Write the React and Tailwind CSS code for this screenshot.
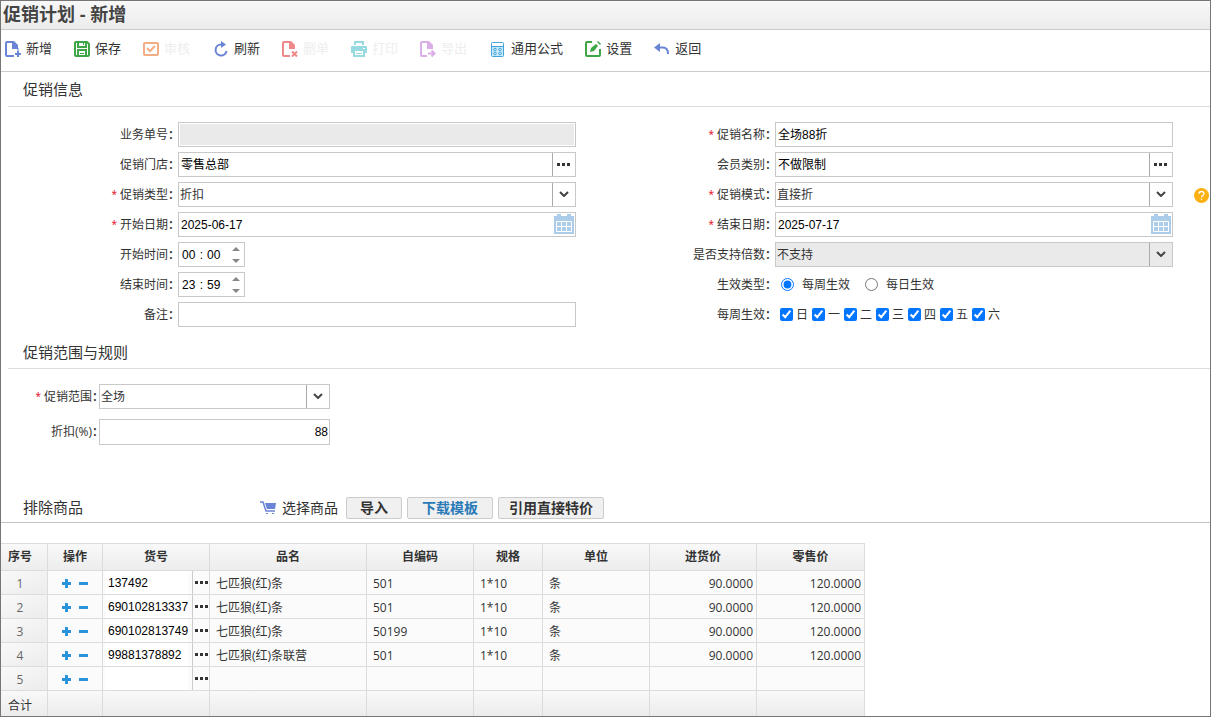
import React from 'react'

const toolGroups = [
    [
        {icon: 'add', text: '新增'},
        {icon: 'save', text: '保存'},
        {icon: 'audit', text: '审核', disabled: true},
    ],
    [
        {icon: 'refresh', text: '刷新'},
        {icon: 'remove', text: '删单', disabled: true},
        {icon: 'print', text: '打印', disabled: true},
        {icon: 'export', text: '导出', disabled: true},
    ],
    [
        {icon: 'formula', text: '通用公式'},
        {icon: 'setting', text: '设置'},
        {icon: 'back', text: '返回'},
    ],
]

const goods = [
    {no: '137492', name: '七匹狼(红)条', code: '501', spec: '1*10', unit: '条', cost: '90.0000', price: '120.0000'},
    {no: '690102813337', name: '七匹狼(红)条', code: '501', spec: '1*10', unit: '条', cost: '90.0000', price: '120.0000'},
    {no: '690102813749', name: '七匹狼(红)条', code: '50199', spec: '1*10', unit: '条', cost: '90.0000', price: '120.0000'},
    {no: '99881378892', name: '七匹狼(红)条联营', code: '501', spec: '1*10', unit: '条', cost: '90.0000', price: '120.0000'},
    {no: '', name: '', code: '', spec: '', unit: '', cost: '', price: ''},
]

const columns = [
    {title: '序号', width: 'w-[47px]'},
    {title: '操作', width: 'w-[55px]'},
    {title: '货号', width: 'w-[107px]'},
    {title: '品名', width: 'w-[157px]'},
    {title: '自编码', width: 'w-[107px]'},
    {title: '规格', width: 'w-[69px]'},
    {title: '单位', width: 'w-[107px]'},
    {title: '进货价', width: 'w-[107px]'},
    {title: '零售价', width: 'w-[108px]'},
]

const inputFont = "font-['Liberation_Sans','Noto_Sans_CJK_SC',sans-serif]"
const boxClass = 'flex h-[25px] min-w-0 flex-1 border border-[#c8c8c8]'
const cell = 'border-r border-b border-[#dcdcdc]'

const ToolIcon = ({name}) => {
    const icons = {
        add: (
            <g fill="none" stroke="#6b85d6" strokeWidth="2">
                <path d="M9 15H2q-1 0-1-1V2q0-1 1-1h6"/>
                <path d="M7 0h2l4 4v4H7z" fill="#6b85d6" stroke="none"/>
                <path d="M13 7v3" strokeWidth="1"/>
                <path d="M10 13h6M13 10v6"/>
            </g>
        ),
        save: (
            <g fill="none" stroke="#3fa648" strokeWidth="2">
                <path d="M1 2q0-1 1-1h11l2 2v11q0 1-1 1H2q-1 0-1-1z"/>
                <path d="M4 1v5h8V1M4 15V9h8v6"/>
                <path d="M6 12.500h4M9.500 2v2" strokeWidth="1"/>
            </g>
        ),
        audit: (
            <g fill="none" stroke="#f3ad84" strokeWidth="2">
                <rect x="1" y="2" width="14" height="12" rx="1"/>
                <path d="M4 7l3 3 5-5"/>
            </g>
        ),
        refresh: (
            <g fill="none" stroke="#6b85d6" strokeWidth="2">
                <path d="M9 3.500H8A5.500 5.500 0 1 0 13.500 10"/>
                <path d="M8 0l5 3.500L8 7z" fill="#6b85d6" stroke="none"/>
            </g>
        ),
        remove: (
            <g fill="none" stroke="#ef8888" strokeWidth="2">
                <path d="M8 15H2q-1 0-1-1V2q0-1 1-1h6"/>
                <path d="M7 0h2l4 4v4H7z" fill="#ef8888" stroke="none"/>
                <path d="M10 10.500l5 5M15 10.500l-5 5"/>
            </g>
        ),
        print: (
            <g fill="#98dae2">
                <path d="M3 0h10v4H3zM1 5h14q1 0 1 1v6h-2v4H2v-4H0V6q0-1 1-1z"/>
                <path d="M5 2h6v2H5zM4 10h8v4H4zM12 7h2v1h-2z" fill="#fff"/>
                <path d="M5 12h6v1H5z"/>
            </g>
        ),
        export: (
            <g fill="none" stroke="#dcaee8" strokeWidth="2">
                <path d="M7 15H2q-1 0-1-1V2q0-1 1-1h6"/>
                <path d="M7 0h2l4 4v4H7z" fill="#dcaee8" stroke="none"/>
                <path d="M8 12.500h6M11.500 9.500l3 3-3 3"/>
            </g>
        ),
        formula: (
            <g fill="none" stroke="#45a3dc">
                <rect x="1.500" y="1.500" width="12" height="14" rx="1" fill="#c9eafa"/>
                <path d="M2 2h11v3H2z" fill="#fff" stroke="none"/>
                <path d="M2 5.500h11"/>
                <circle cx="5" cy="8.500" r="1.300"/>
                <circle cx="10" cy="8.500" r="1.300"/>
                <circle cx="5" cy="12.500" r="1.300"/>
                <circle cx="10" cy="12.500" r="1.300"/>
            </g>
        ),
        setting: (
            <g fill="none" stroke="#3fa648" strokeWidth="2">
                <path d="M7 1H2q-1 0-1 1v12q0 1 1 1h12q1 0 1-1V8"/>
                <path d="M5 11l1-4 5-4 2 2-4 5z" fill="#3fa648" stroke="none"/>
                <path d="M12 1l1-1 3 3-1 1z" fill="#3fa648" stroke="none"/>
            </g>
        ),
        back: (
            <g fill="none" stroke="#6b85d6" strokeWidth="2">
                <path d="M5 6.500h4q5 0 5 6.500"/>
                <path d="M0 6.500l6-4.500v9z" fill="#6b85d6" stroke="none"/>
            </g>
        ),
    }
    return <svg className="h-4 w-4" viewBox="0 0 16 16" aria-hidden="true">{icons[name]}</svg>
}

const Dots = () => (
    <svg className="h-[3px] w-[13px]" viewBox="0 0 13 3" fill="#333" aria-hidden="true">
        <path d="M0 0h3v3H0zM5 0h3v3H5zM10 0h3v3h-3z"/>
    </svg>
)

const Chevron = () => (
    <svg className="h-[6px] w-[10px]" viewBox="0 0 10 6" fill="none" stroke="#444" strokeWidth="2" aria-hidden="true">
        <path d="M1 1l4 4 4-4"/>
    </svg>
)

const CalendarIcon = () => (
    <svg className="h-5 w-5" viewBox="0 0 20 20" aria-hidden="true">
        <path d="M0 2h3V0h4v2h6V0h4v2h3v18H0z" fill="#abcde9"/>
        <path d="M2.500 7.500h15v10h-15zM2.500 12.500h15M7.500 7.500v10M12.500 7.500v10" fill="none" stroke="#fff"/>
    </svg>
)

const Label = ({id, required, children}) => (
    <label htmlFor={id} className="flex items-center justify-end">
        {required && <span className="mr-[3px] text-[10px] text-[#e60012]">*</span>}
        {children}
        <span className="ml-px w-1 pb-[2px] text-sm leading-5 font-semibold">:</span>
    </label>
)

// one labelled line of the top form
const Row = ({id, label, required, children}) => (
    <div className="relative flex h-[25px] items-center pr-[29px]">
        <div className="w-[170px] shrink-0 pr-[5px]">
            <Label id={id} required={required}>{label}</Label>
        </div>
        {children}
    </div>
)

const TextBox = ({id, value, disabled, type}) => (
    <div className={boxClass + (disabled ? ' p-px' : '')}>
        <input id={id} defaultValue={value} disabled={disabled}
               className={`${inputFont} min-w-0 flex-1 px-[2px] text-black disabled:bg-[#eaeaea]`}/>
        {type === 'pick' && (
            <button aria-label="选择" className="flex w-[23px] items-center justify-center border-l border-[#aaa] pr-px">
                <Dots/>
            </button>
        )}
        {type === 'date' && (
            <button aria-label="日期" className="flex w-[21px] items-start pt-px"><CalendarIcon/></button>
        )}
    </div>
)

const SelectBox = ({id, value, disabled}) => (
    <div className={boxClass + ' relative' + (disabled ? ' bg-[#eaeaea]' : '')}>
        <select id={id} disabled={disabled} defaultValue={value}
                className="min-w-0 flex-1 appearance-none pl-px text-[#333] opacity-100">
            <option>{value}</option>
        </select>
        <span className="pointer-events-none absolute inset-y-0 right-0 flex w-[23px] items-center justify-center border-l border-[#aaa] pr-px pb-px">
            <Chevron/>
        </span>
    </div>
)

const TimeBox = ({id, hour, minute}) => (
    <div className={`${inputFont} flex h-[25px] w-[67px] items-center border border-[#c8c8c8] pl-[3px] text-black`}>
        <input id={id} defaultValue={hour} className="w-4"/>
        <span className="w-[9px] pr-[2px] text-center">:</span>
        <input aria-label="分" defaultValue={minute} className="w-4"/>
        <div className="flex flex-1 flex-col items-center gap-2 pl-1">
            <button aria-label="增加">
                <svg className="block h-1 w-2" viewBox="0 0 8 4" fill="#888"><path d="M4 0l4 4H0z"/></svg>
            </button>
            <button aria-label="减少">
                <svg className="block h-1 w-2" viewBox="0 0 8 4" fill="#888"><path d="M0 0h8L4 4z"/></svg>
            </button>
        </div>
    </div>
)

const GoodsTable = () => (
    <table className="mt-5 w-[864px] table-fixed border-separate border-spacing-0 border-t border-[#dcdcdc] bg-[#fbfbfb] leading-4">
        <thead>
        <tr className="h-[27px] bg-linear-to-b from-[#f9f9f9] to-[#ececec]">
            {columns.map((c, i) => (
                <th key={c.title} className={`${cell} ${c.width} ${i === 0 ? 'pr-2' : ''} font-bold`}>{c.title}</th>
            ))}
        </tr>
        </thead>
        <tbody>
        {goods.map((g, i) => (
            <tr key={i} className="h-6">
                <td className={`${cell} bg-linear-to-br from-[#f9f9f9] to-[#ececec] pt-[2px] pr-2 text-center text-[#666]`}>{i + 1}</td>
                <td className={`${cell} pt-[2px]`}>
                    <div className="flex items-center justify-center gap-2">
                        <button aria-label="添加行">
                            <svg className="block h-[9px] w-[9px]" viewBox="0 0 9 9" fill="#2b93dc">
                                <path d="M3 0h3v3h3v3H6v3H3V6H0V3h3z"/>
                            </svg>
                        </button>
                        <button aria-label="删除行">
                            <svg className="block h-[9px] w-[9px]" viewBox="0 0 9 9" fill="#2b93dc">
                                <path d="M0 3h9v3H0z"/>
                            </svg>
                        </button>
                    </div>
                </td>
                <td className={cell}>
                    <div className="flex h-[23px]">
                        <input aria-label="货号" defaultValue={g.no}
                               className={`${inputFont} ml-[2px] mr-1 min-w-0 flex-1 bg-white pl-[3px] text-black`}/>
                        <button aria-label="选择商品" className="flex w-[17px] items-center justify-center border-l border-[#ccc]">
                            <Dots/>
                        </button>
                    </div>
                </td>
                <td className={`${cell} pt-[2px] pl-[6px]`}>{g.name}</td>
                <td className={`${cell} pt-[2px] pl-[6px]`}>{g.code}</td>
                <td className={`${cell} pt-[2px] pl-[6px]`}>{g.spec}</td>
                <td className={`${cell} pt-[2px] pl-[6px]`}>{g.unit}</td>
                <td className={`${cell} pt-[2px] pr-[3px] text-right`}>{g.cost}</td>
                <td className={`${cell} pt-[2px] pr-[3px] text-right`}>{g.price}</td>
            </tr>
        ))}
        </tbody>
        <tfoot>
        <tr className="h-[25px] bg-linear-to-b from-[#f9f9f9] to-[#ececec]">
            {columns.map((c, i) => (
                <td key={c.title} className={`border-r border-[#dcdcdc] ${i === 0 ? 'pt-1 pr-2 text-center' : ''}`}>
                    {i === 0 ? '合计' : ''}
                </td>
            ))}
        </tr>
        </tfoot>
    </table>
)

const App = () => {
    return (
        <div className="min-h-screen border border-[#767676] bg-white font-['Open_Sans','Noto_Sans_CJK_SC',sans-serif] text-xs text-[#333]">
            <h1 className="flex h-[29px] items-center border-b border-[#ccc] bg-linear-to-b from-[#f8f8f8] to-[#ececec] pb-[2px] pl-[2px] text-lg font-bold text-[#444]">
                促销计划 - 新增
            </h1>
            <div className="flex h-[42px] gap-[23px] border-b border-[#ccc] pb-1 pl-1 text-[13px]">
                {toolGroups.map((group, i) => (
                    <div key={i} className="flex gap-[22px]">
                        {group.map((t) => (
                            <button key={t.text} disabled={t.disabled}
                                    className="flex items-center gap-[5px] disabled:text-[#eee]">
                                <ToolIcon name={t.icon}/>
                                {t.text}
                            </button>
                        ))}
                    </div>
                ))}
            </div>

            <h2 className="ml-[7px] flex h-[35px] items-center border-b border-[#ddd] pl-[15px] text-[15px]">促销信息</h2>
            <div className="grid grid-cols-2 pt-[15px] pr-2 pl-[7px]">
                <div className="flex flex-col gap-[5px]">
                    <Row id="bill" label="业务单号"><TextBox id="bill" disabled/></Row>
                    <Row id="store" label="促销门店"><TextBox id="store" value="零售总部" type="pick"/></Row>
                    <Row id="kind" label="促销类型" required><SelectBox id="kind" value="折扣"/></Row>
                    <Row id="start" label="开始日期" required><TextBox id="start" value="2025-06-17" type="date"/></Row>
                    <Row id="from" label="开始时间"><TimeBox id="from" hour="00" minute="00"/></Row>
                    <Row id="to" label="结束时间"><TimeBox id="to" hour="23" minute="59"/></Row>
                    <Row id="memo" label="备注"><TextBox id="memo"/></Row>
                </div>
                <div className="flex flex-col gap-[5px]">
                    <Row id="name" label="促销名称" required><TextBox id="name" value="全场88折"/></Row>
                    <Row id="member" label="会员类别"><TextBox id="member" value="不做限制" type="pick"/></Row>
                    <Row id="mode" label="促销模式" required>
                        <SelectBox id="mode" value="直接折"/>
                        <button aria-label="帮助" className="absolute top-[6px] -right-[7px]">
                            <svg className="block h-[15px] w-[15px]" viewBox="0 0 15 15">
                                <circle cx="7.500" cy="7.500" r="7.500" fill="#fbb014"/>
                                <path d="M5 5.700q.2-2.200 2.500-2.200T10 5.500q0 1-1.200 1.900T7.500 9.200M7.500 10.400v1.400"
                                      fill="none" stroke="#fff" strokeWidth="1.300"/>
                            </svg>
                        </button>
                    </Row>
                    <Row id="end" label="结束日期" required><TextBox id="end" value="2025-07-17" type="date"/></Row>
                    <Row id="multiple" label="是否支持倍数"><SelectBox id="multiple" value="不支持" disabled/></Row>
                    <Row id="weekly" label="生效类型">
                        <div className="flex gap-[15px] pl-[6px]">
                            <label className="flex items-center gap-2">
                                <input type="radio" id="weekly" name="effect" defaultChecked className="h-[13px] w-[13px]"/>每周生效
                            </label>
                            <label className="flex items-center gap-2">
                                <input type="radio" name="effect" className="h-[13px] w-[13px]"/>每日生效
                            </label>
                        </div>
                    </Row>
                    <Row id="day0" label="每周生效">
                        <div className="flex gap-1 pl-[5px]">
                            {['日', '一', '二', '三', '四', '五', '六'].map((d, i) => (
                                <label key={d} className="flex items-center gap-[3px]">
                                    <input type="checkbox" id={`day${i}`} defaultChecked className="h-[13px] w-[13px]"/>{d}
                                </label>
                            ))}
                        </div>
                    </Row>
                </div>
            </div>

            <h2 className="mt-2 ml-[7px] flex h-[34px] items-center border-b border-[#ddd] pl-[15px] text-[15px]">促销范围与规则</h2>
            <div className="flex flex-col gap-[10px] pt-[15px]">
                <div className="flex w-[329px] items-center">
                    <div className="w-[98px] shrink-0 pr-[2px]"><Label id="scope" required>促销范围</Label></div>
                    <SelectBox id="scope" value="全场"/>
                </div>
                <div className="flex w-[329px] items-center">
                    <div className="w-[98px] shrink-0 pr-[2px]"><Label id="rate">折扣(%)</Label></div>
                    <input id="rate" defaultValue="88"
                           className={`${inputFont} h-[26px] min-w-0 flex-1 border border-[#c8c8c8] px-px text-right text-black`}/>
                </div>
            </div>

            <div className="mt-12 flex h-[30px] items-center border-b border-[#c4c4c4] pl-[22px] text-sm">
                <h2 className="w-[237px] shrink-0 text-[15px]">排除商品</h2>
                <button className="mr-2 flex items-center gap-[6px]">
                    <svg className="h-4 w-4" viewBox="0 0 16 16" aria-hidden="true">
                        <path d="M0 2h3l3 9h9" fill="none" stroke="#6b85d6" strokeWidth="1.500"/>
                        <path d="M5 3h11l-1 6H7z" fill="#6b85d6"/>
                        <path d="M6 13h2v1H6zM12 13h2v1h-2z" fill="#6b85d6"/>
                    </svg>
                    选择商品
                </button>
                <div className="flex h-[22px] gap-[5px] leading-5 font-bold">
                    <button className="rounded-xs border border-[#ccc] bg-[#f0f0f0] px-[13px]">导入</button>
                    <button className="rounded-xs border border-[#ccc] bg-[#f0f0f0] px-[14px] text-[#2a7ab8]">下载模板</button>
                    <button className="rounded-xs border border-[#ccc] bg-[#f0f0f0] px-[10px]">引用直接特价</button>
                </div>
            </div>

            <GoodsTable/>
        </div>
    );
};
export default App;
